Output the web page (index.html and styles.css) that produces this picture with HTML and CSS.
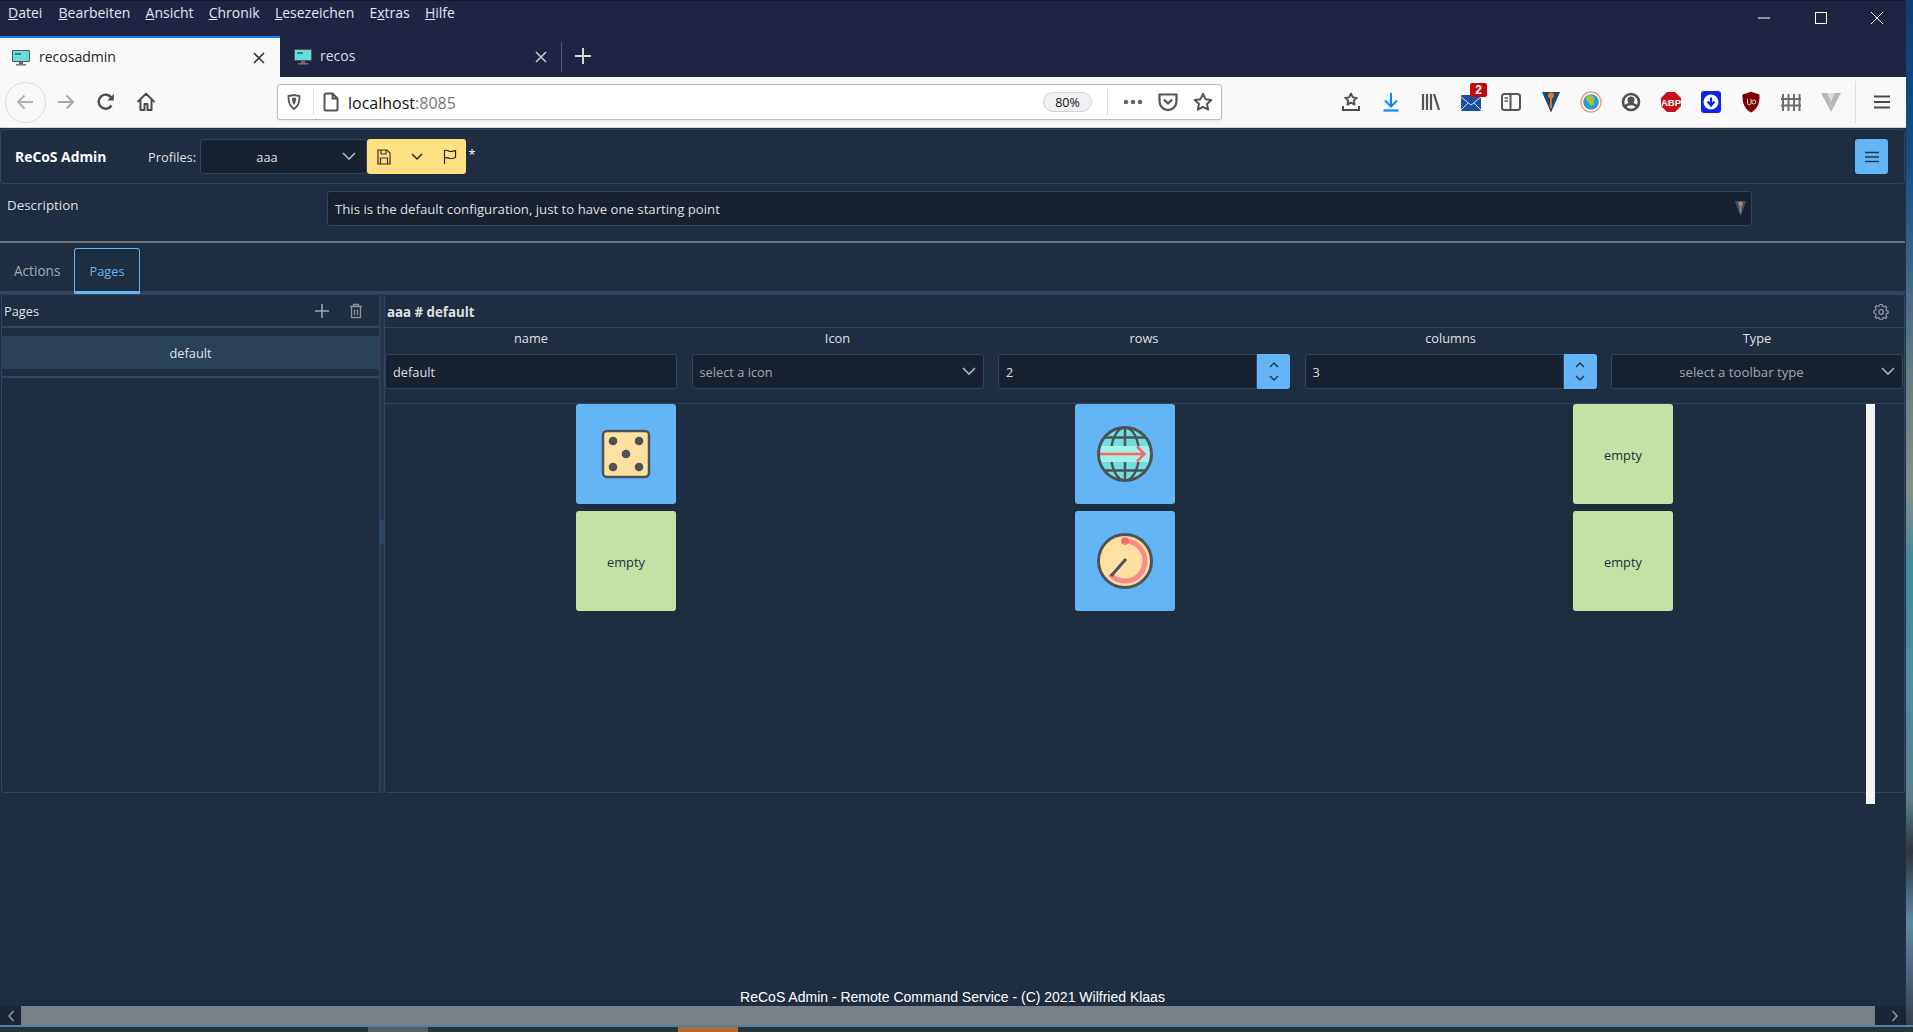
FILE: index.html
```html
<!DOCTYPE html>
<html lang="de">
<head>
<meta charset="utf-8">
<title>recosadmin</title>
<link rel="stylesheet" href="styles.css">
</head>
<body>
<div class="screen">
  <div class="window">
    <div class="menubar">
      <nav class="menu">
        <span><u>D</u>atei</span><span><u>B</u>earbeiten</span><span><u>A</u>nsicht</span><span><u>C</u>hronik</span><span><u>L</u>esezeichen</span><span>E<u>x</u>tras</span><span><u>H</u>ilfe</span>
      </nav>
      <div class="winctl">
        <svg width="14" height="14" viewBox="0 0 14 14"><path d="M1 7h12" stroke="#fff" fill="none"/></svg>
        <svg width="14" height="14" viewBox="0 0 14 14"><rect x="1.5" y="1.5" width="11" height="11" stroke="#fff" fill="none"/></svg>
        <svg width="14" height="14" viewBox="0 0 14 14"><path d="M1 1l12 12M13 1L1 13" stroke="#fff" fill="none"/></svg>
      </div>
    </div>
    <div class="tabstrip">
      <div class="btab btab-active">
        <svg class="favicon" width="18" height="16" viewBox="0 0 18 16"><rect width="18" height="12" rx="1" fill="#555"/><rect x="1" y="1" width="16" height="10" fill="#66dcdc"/><rect x="3" y="3" width="6" height="2" fill="#2a8a8a"/><rect x="7" y="12" width="4" height="2" fill="#666"/><rect x="4" y="14" width="10" height="1.5" fill="#777"/></svg>
        <span class="btab-title">recosadmin</span>
        <svg class="btab-x" width="14" height="14" viewBox="0 0 14 14"><path d="M2 2l10 10M12 2L2 12" stroke="#333" stroke-width="1.6" fill="none"/></svg>
      </div>
      <div class="btab btab-idle">
        <svg class="favicon" width="18" height="16" viewBox="0 0 18 16"><rect width="18" height="12" rx="1" fill="#555"/><rect x="1" y="1" width="16" height="10" fill="#66dcdc"/><rect x="3" y="3" width="6" height="2" fill="#2a8a8a"/><rect x="7" y="12" width="4" height="2" fill="#666"/><rect x="4" y="14" width="10" height="1.5" fill="#777"/></svg>
        <span class="btab-title">recos</span>
        <svg class="btab-x" width="14" height="14" viewBox="0 0 14 14"><path d="M2 2l10 10M12 2L2 12" stroke="#c8c8d0" stroke-width="1.6" fill="none"/></svg>
      </div>
      <div class="tabsep"></div>
      <svg class="newtab" width="18" height="18" viewBox="0 0 18 18"><path d="M9 1v16M1 9h16" stroke="#d8d8de" stroke-width="2" fill="none"/></svg>
    </div>
    <div class="toolbar">
      <div class="nav-btns">
        <div class="back-circle">
          <svg width="20" height="20" viewBox="0 0 20 20"><path d="M18 10H3M9.5 3.5L3 10l6.5 6.5" stroke="#b0b0b4" stroke-width="2" fill="none"/></svg>
        </div>
        <svg class="nb-forward" width="20" height="20" viewBox="0 0 20 20"><path d="M2 10h15M10.5 3.5L17 10l-6.5 6.5" stroke="#a8a8ac" stroke-width="2" fill="none"/></svg>
        <svg class="nb-reload" width="20" height="20" viewBox="0 0 20 20"><path d="M15.5 13.5A7 7 0 1 1 15.6 6" stroke="#4a4a4f" stroke-width="2.4" fill="none"/><path d="M17.8 2v6.4h-6.4z" fill="#4a4a4f"/></svg>
        <svg class="nb-home" width="20" height="20" viewBox="0 0 20 20"><path d="M1.5 10L10 1.8 18.5 10M4.5 8v10h4v-6h3v6h4V8" stroke="#4a4a4f" stroke-width="2" fill="none" stroke-linejoin="round"/></svg>
      </div>
      <div class="urlbar">
        <svg class="ub-shield" width="14" height="16" viewBox="0 0 14 16"><path d="M1.500 2L7 1l5.500 1c.3 5.500-1 10-5.500 13C2.500 12 1.200 7.500 1.500 2z" stroke="#555" stroke-width="1.800" fill="none"/><path d="M5 3.800h4c0 3.500-.5 5.500-2 7.200-1.500-1.700-2-3.700-2-7.200z" fill="#555"/></svg>
        <div class="ub-sep"></div>
        <svg class="ub-page" width="16" height="20" viewBox="0 0 16 20"><path d="M3 1.500h6.500L14.500 6.500V17a1.500 1.500 0 0 1-1.500 1.500H3A1.500 1.500 0 0 1 1.500 17V3A1.500 1.500 0 0 1 3 1.500zM9.500 1.500v5h5" stroke="#555" stroke-width="2" fill="none"/></svg>
        <span class="ub-url">localhost<span class="ub-port">:8085</span></span>
        <span class="ub-zoom">80%</span>
        <div class="ub-sep ub-sep2"></div>
        <svg class="ub-dots" width="20" height="6" viewBox="0 0 20 6"><circle cx="3" cy="3" r="2.300" fill="#666"/><circle cx="10" cy="3" r="2.300" fill="#666"/><circle cx="17" cy="3" r="2.300" fill="#666"/></svg>
        <svg class="ub-pocket" width="20" height="18" viewBox="0 0 20 18"><path d="M1.500 1.500h17v7a8.500 8.500 0 0 1-17 0zM6 6.500l4 4 4-4" stroke="#555" stroke-width="2.200" fill="none" stroke-linejoin="round"/></svg>
        <svg class="ub-star" width="20" height="20" viewBox="0 0 20 20"><path d="M10 1.800l2.500 5.400 5.800.7-4.300 4 1.200 5.800L10 14.800l-5.200 2.900L6 11.900l-4.300-4 5.800-.7z" stroke="#555" stroke-width="2" fill="none" stroke-linejoin="round"/></svg>
      </div>
      <div class="tb-icons">
        <span class="tbi"><svg width="20" height="20" viewBox="0 0 20 20"><path d="M10 1.500l1.800 3.800 4 .5-3 2.800.8 4L10 10.600 6.400 12.600l.8-4-3-2.800 4-.5z" stroke="#4a4a4f" stroke-width="1.800" fill="none" stroke-linejoin="round"/><path d="M2 14v4h16v-4" stroke="#4a4a4f" stroke-width="2" fill="none"/></svg></span>
        <span class="tbi"><svg width="18" height="20" viewBox="0 0 18 20"><path d="M9 1v13M3 8.500l6 6 6-6" stroke="#0a84ff" stroke-width="2" fill="none"/><path d="M1.500 18.500h15" stroke="#0a84ff" stroke-width="2.200"/></svg></span>
        <span class="tbi"><svg width="20" height="20" viewBox="0 0 20 20"><path d="M2 2v16M6 2v16M10 2v16M13 2l5 16" stroke="#555" stroke-width="2.200" fill="none"/></svg></span>
        <span class="tbi tbi-mail"><svg width="20" height="16" viewBox="0 0 20 16"><rect width="20" height="16" rx="1" fill="#1f4ea0"/><path d="M0 2l10 8 10-8M0 15l7-7M20 15l-7-7" stroke="#d8e2f4" stroke-width="1" fill="none"/></svg><b class="mail-badge">2</b></span>
        <span class="tbi"><svg width="20" height="18" viewBox="0 0 20 18"><rect x="1" y="1" width="18" height="16" rx="2.500" stroke="#555" stroke-width="2" fill="none"/><path d="M9.500 1v16" stroke="#555" stroke-width="2"/><path d="M3.500 5h3.500M3.500 8h3.500" stroke="#555" stroke-width="1.500"/></svg></span>
        <span class="tbi"><svg width="20" height="22" viewBox="0 0 20 22"><path d="M1 1h18L10 21.500z" fill="#1a4a72"/><circle cx="10" cy="4.500" r="3" fill="#e8732a"/><path d="M10 6v11" stroke="#e8732a" stroke-width="2"/></svg></span>
        <span class="tbi"><svg width="22" height="22" viewBox="0 0 22 22"><circle cx="11" cy="11" r="10" fill="#fff" stroke="#f59a7a" stroke-width="1.500"/><circle cx="11" cy="11" r="7.800" fill="#2f9ccf"/><path d="M7 4.500c3-1 6 0 7 2s-1 3 0 5-2 4-3.500 3-1-3-3-4-2-4-.5-6z" fill="#9cc24a"/></svg></span>
        <span class="tbi"><svg width="20" height="20" viewBox="0 0 20 20"><circle cx="10" cy="10" r="8" stroke="#505050" stroke-width="2.600" fill="none"/><circle cx="10" cy="8" r="3.500" fill="#505050"/><path d="M4 15c2-4 10-4 12 0" stroke="#505050" stroke-width="2.600" fill="none"/></svg></span>
        <span class="tbi"><svg width="22" height="22" viewBox="0 0 22 22"><path d="M7 1h8l6 6v8l-6 6H7l-6-6V7z" fill="#c4111b"/><text class="abp" x="11" y="14.500" text-anchor="middle">ABP</text></svg></span>
        <span class="tbi"><svg width="20" height="22" viewBox="0 0 20 22"><rect width="20" height="22" rx="3" fill="#0a24f0"/><circle cx="10" cy="11" r="7.500" fill="#fff"/><path d="M10 6.500v7M6.500 10.500l3.500 4 3.500-4" stroke="#0a24f0" stroke-width="2.200" fill="none"/></svg></span>
        <span class="tbi"><svg width="20" height="22" viewBox="0 0 20 22"><path d="M10 .8L18.500 3.500c.5 9-2.500 15-8.500 18C4 18.500 1 12.500 1.500 3.500z" fill="#800000"/><path d="M6.500 8v4a1.800 1.800 0 0 0 3.600 0V8" stroke="#ddd" stroke-width="1" fill="none"/><circle cx="12.800" cy="11" r="2" stroke="#ddd" stroke-width="1" fill="none"/></svg></span>
        <span class="tbi"><svg width="20" height="20" viewBox="0 0 20 20"><path d="M2 2v17M7.500 2v17M13 2v17M18.500 2v17M0 7h20M0 13.500h20" stroke="#6e6e6e" stroke-width="2" fill="none"/></svg></span>
        <span class="tbi"><svg width="20" height="20" viewBox="0 0 20 20"><path d="M0 1h7l3 8 3-8h7l-10 19z" fill="#b8b8b8"/><path d="M6 1h8l-4 9z" fill="#d8d8d8"/></svg></span>
      </div>
      <div class="tb-sep"></div>
      <svg class="tb-burger" width="16" height="14" viewBox="0 0 16 14"><path d="M0 1.500h16M0 7h16M0 12.500h16" stroke="#4a4a4f" stroke-width="2.200"/></svg>
    </div>

    <main class="app">
      <header class="navbar">
        <strong class="brand">ReCoS Admin</strong>
        <span class="profiles-label">Profiles:</span>
        <div class="dropdown dropdown-profile">
          <span class="dropdown-value">aaa</span>
          <svg class="chev" width="14" height="9" viewBox="0 0 14 9"><path d="M1 1l6 6 6-6" stroke="#a8b4c0" stroke-width="1.700" fill="none"/></svg>
        </div>
        <div class="warnbtn warnbtn-split">
          <svg width="14" height="16" viewBox="0 0 14 16"><path d="M1 1h9l3 3v11H1zM4 1v4h5V1M3.500 15V9h7v6" stroke="#3a3320" stroke-width="1.200" fill="none"/></svg>
          <svg width="12" height="8" viewBox="0 0 12 8"><path d="M1 1l5 5 5-5" stroke="#2a2618" stroke-width="1.500" fill="none"/></svg>
        </div>
        <div class="warnbtn warnbtn-flag">
          <svg width="14" height="16" viewBox="0 0 14 16"><path d="M1.500 15V1.500c3-1 4 1 6 1s3-.5 5-1v7c-2 1-3 1-5 1s-3-1.500-6-.5" stroke="#2a2618" stroke-width="1.200" fill="none"/></svg>
        </div>
        <span class="dirty">*</span>
        <div class="menu-btn">
          <svg width="14" height="12" viewBox="0 0 14 12"><path d="M0 1.500h14M0 6h14M0 10.500h14" stroke="#24384e" stroke-width="1.500"/></svg>
        </div>
      </header>

      <section class="desc-row">
        <span class="desc-label">Description</span>
        <div class="input desc-input">
          <span>This is the default configuration, just to have one starting point</span>
          <svg width="13" height="17" viewBox="0 0 12 16"><path d="M.5 1h11L6 15.500z" fill="#1f5a88"/><circle cx="6" cy="3.500" r="2.200" fill="#e8732a"/><path d="M6 5v7" stroke="#e8732a" stroke-width="1.500"/></svg>
        </div>
      </section>
      <div class="rule"></div>

      <div class="tabs">
        <span class="tab tab-idle">Actions</span>
        <span class="tab tab-active">Pages</span>
      </div>

      <div class="split">
        <aside class="panel panel-left">
          <div class="panel-head">
            <span>Pages</span>
            <div class="head-icons">
              <svg width="14" height="14" viewBox="0 0 14 14"><path d="M7 0v14M0 7h14" stroke="#a0a8b2" stroke-width="1.500"/></svg>
              <svg width="14" height="16" viewBox="0 0 14 16"><path d="M1 3.500h12M4.500 3.500V1.500h5v2M2.500 3.500v11h9v-11M5.500 6.500v5.500M8.500 6.500v5.500" stroke="#8a929c" stroke-width="1.300" fill="none"/></svg>
            </div>
          </div>
          <div class="listbox">
            <div class="list-item">default</div>
          </div>
        </aside>
        <div class="gutter"><div class="gutter-handle"></div></div>
        <section class="panel panel-right">
          <div class="panel-head panel-head-right">
            <strong class="page-title">aaa # default</strong>
            <svg width="16" height="16" viewBox="0 0 16 16"><path d="M6.800 1h2.400l.4 2 1.500.7 1.800-1 1.500 1.700-1.100 1.700.5 1.600 1.900.7v2.200l-1.900.7-.5 1.600 1.100 1.700-1.500 1.700-1.800-1-1.500.7-.4 2H6.800l-.4-2-1.500-.7-1.800 1-1.500-1.700 1.100-1.700-.5-1.600L.3 10.200V8l1.900-.7.500-1.600-1.100-1.700L3.100 2.300l1.800 1 1.500-.7z" transform="translate(.7 -.6) scale(.92)" stroke="#8f99a5" stroke-width="1.300" fill="none"/><circle cx="8" cy="8" r="2.300" stroke="#8f99a5" stroke-width="1.300" fill="none"/></svg>
          </div>
          <div class="form">
            <label class="form-label">name</label>
            <label class="form-label">Icon</label>
            <label class="form-label">rows</label>
            <label class="form-label">columns</label>
            <label class="form-label">Type</label>

            <div class="input"><span>default</span></div>
            <div class="dropdown">
              <span class="dropdown-ph dropdown-ph-left">select a icon</span>
              <svg class="chev" width="14" height="9" viewBox="0 0 14 9"><path d="M1 1l6 6 6-6" stroke="#a8b4c0" stroke-width="1.700" fill="none"/></svg>
            </div>
            <div class="spinner">
              <div class="input spinner-input"><span>2</span></div>
              <div class="spinner-btns">
                <svg width="10" height="7" viewBox="0 0 10 7"><path d="M1 6l4-4 4 4" stroke="#24384e" stroke-width="1.500" fill="none"/></svg>
                <svg width="10" height="7" viewBox="0 0 10 7"><path d="M1 1l4 4 4-4" stroke="#24384e" stroke-width="1.500" fill="none"/></svg>
              </div>
            </div>
            <div class="spinner">
              <div class="input spinner-input"><span>3</span></div>
              <div class="spinner-btns">
                <svg width="10" height="7" viewBox="0 0 10 7"><path d="M1 6l4-4 4 4" stroke="#24384e" stroke-width="1.500" fill="none"/></svg>
                <svg width="10" height="7" viewBox="0 0 10 7"><path d="M1 1l4 4 4-4" stroke="#24384e" stroke-width="1.500" fill="none"/></svg>
              </div>
            </div>
            <div class="dropdown">
              <span class="dropdown-ph dropdown-ph-type">select a toolbar type</span>
              <svg class="chev" width="14" height="9" viewBox="0 0 14 9"><path d="M1 1l6 6 6-6" stroke="#a8b4c0" stroke-width="1.700" fill="none"/></svg>
            </div>
          </div>
          <div class="board">
            <div class="tiles">
              <div class="tile tile-action">
                <svg width="50" height="50" viewBox="0 0 50 50"><rect x="2" y="2" width="46" height="46" rx="4" fill="#ffe0a3" stroke="#4d5257" stroke-width="2.500"/><circle cx="12" cy="12" r="4.300" fill="#4d5257"/><circle cx="38" cy="12" r="4.300" fill="#4d5257"/><circle cx="25" cy="25" r="4.300" fill="#4d5257"/><circle cx="12" cy="38" r="4.300" fill="#4d5257"/><circle cx="38" cy="38" r="4.300" fill="#4d5257"/></svg>
              </div>
              <div class="tile tile-action">
                <svg width="60" height="60" viewBox="0 0 60 60"><circle cx="30" cy="30" r="26.500" fill="#6fe0df"/><g stroke="#4d5257" stroke-width="2.500" fill="none"><path d="M9 13.500h42M9 46.500h42"/><ellipse cx="30" cy="30" rx="14" ry="26.500"/><path d="M30 3.500v53"/></g><path d="M4 22h52v16H4z" fill="#a6f0ec"/><path d="M4.500 30h44M42 22.500l7.500 7.500-7.500 7.500" stroke="#f46a6a" stroke-width="2.500" fill="none"/><circle cx="30" cy="30" r="26.500" fill="none" stroke="#4d5257" stroke-width="3"/></svg>
              </div>
              <div class="tile tile-empty">empty</div>
              <div class="tile tile-empty">empty</div>
              <div class="tile tile-action">
                <svg width="60" height="60" viewBox="0 0 60 60"><circle cx="30" cy="30" r="26.500" fill="#ffe0a3" stroke="#4d5257" stroke-width="3"/><path d="M30 10A20 20 0 1 1 15 43.200" fill="none" stroke="#fb8a8a" stroke-width="5"/><circle cx="30" cy="10" r="3.800" fill="#f46a6a"/><path d="M31 28L16 45" stroke="#4d5257" stroke-width="3"/></svg>
              </div>
              <div class="tile tile-empty">empty</div>
            </div>
            <div class="whitebar"></div>
          </div>
        </section>
      </div>

      <footer class="footer">ReCoS Admin - Remote Command Service - (C) 2021 Wilfried Klaas</footer>
    </main>

    <div class="hscroll">
      <div class="hs-btn"><svg width="8" height="12" viewBox="0 0 8 12"><path d="M6.500 1L2 6l4.500 5" stroke="#8a929c" stroke-width="1.600" fill="none"/></svg></div>
      <div class="hs-thumb"></div>
      <div class="hs-btn hs-btn-end"><svg width="8" height="12" viewBox="0 0 8 12"><path d="M1.500 1L6 6l-4.500 5" stroke="#8a929c" stroke-width="1.600" fill="none"/></svg></div>
    </div>
  </div>
  <div class="wallpaper"></div>
</div>
<div class="taskbar">
  <span class="task task-grey"></span>
  <span class="task task-orange"></span>
</div>
</body>
</html>
```
FILE: styles.css
```css
* { box-sizing: border-box; }
html, body { margin: 0; padding: 0; }
body {
  width: 1913px;
  height: 1032px;
  overflow: hidden;
  display: flex;
  flex-direction: column;
  background: #26343c;
  font-family: "Open Sans", "Noto Sans", sans-serif;
}
svg { display: block; flex: none; }
.screen { display: flex; height: 1025px; flex: none; }
.window { width: 1906px; display: flex; flex-direction: column; flex: none; }
.wallpaper {
  flex: 1;
  background: linear-gradient(180deg, #0c3d74 0, #14508c 16%, #6b7f80 38%, #85908a 48%, #3f8a9c 55%, #4c8fa4 66%, #5a7f8a 78%, #30343a 83%, #5d88a8 90%, #38424c 100%);
}

/* browser chrome */
.menubar {
  height: 36px;
  background: #1f2442;
  border-top: 1px solid #14162a;
  display: flex;
  justify-content: space-between;
  color: #e4e4ea;
  font-size: 14px;
}
.menu { display: flex; gap: 15.200px; padding: 2px 0 0 8px; line-height: 20px; }
.menu span:first-child { margin-right: 1px; }
.winctl { display: flex; gap: 42.500px; padding: 10px 22px 0 0; }
.tabstrip { height: 41px; background: #1f2442; display: flex; align-items: center; flex: none; }
.btab { height: 41px; display: flex; align-items: center; font-size: 14px; }
.btab-active {
  width: 280px;
  background: #f9f9fa;
  border-top: 2px solid #0a84ff;
  color: #222;
  padding: 0 14px 0 12px;
}
.btab-idle { width: 281px; color: #dcdce2; padding: 0 13px 0 14px; }
.favicon { margin-right: 9px; }
.btab-idle .favicon { margin-right: 8px; }
.btab-title { flex: 1; padding-bottom: 2px; }
.tabsep { width: 1px; height: 30px; background: #50556e; }
.newtab { margin-left: 12px; margin-bottom: 2px; }
.toolbar {
  height: 51px;
  background: #f9f9fa;
  border-bottom: 1px solid #d8d8da;
  display: flex;
  align-items: center;
  flex: none;
}
.nav-btns { width: 277px; display: flex; align-items: center; padding-left: 5px; }
.back-circle {
  width: 41px; height: 41px;
  border: 1px solid #dcdcde;
  border-radius: 50%;
  display: flex; align-items: center; justify-content: center;
  padding-right: 2px;
}
.nb-forward { margin-left: 10px; }
.nb-reload { margin-left: 20px; }
.nb-home { margin-left: 20px; }
.urlbar {
  width: 945px;
  height: 36px;
  background: #fff;
  border: 1px solid #bcbcbf;
  border-radius: 3px;
  display: flex;
  align-items: center;
  flex: none;
  padding: 0 8px 0 9px;
  box-shadow: 0 1px 3px rgba(0,0,0,.08);
}
.ub-sep { width: 1px; height: 26px; background: #dcdcde; margin-left: 12px; }
.ub-page { margin-left: 9px; }
.ub-url { margin-left: 9px; font-size: 16px; color: #111; flex: 1; padding-top: 1px; }
.ub-port { color: #777; }
.ub-zoom {
  width: 49px; height: 20px;
  border: 1px solid #d4d4d6;
  background: #f0f0f2;
  border-radius: 10px;
  font-size: 12.500px;
  line-height: 19px;
  text-align: center;
  color: #111;
}
.ub-sep2 { margin-left: 15px; }
.ub-dots { margin-left: 15px; }
.ub-pocket { margin-left: 15px; }
.ub-star { margin-left: 15px; }
.tb-icons { display: flex; margin-left: 109px; }
.tbi { width: 40px; height: 40px; display: flex; align-items: center; justify-content: center; position: relative; }
.tbi-mail { padding-top: 2px; }
.mail-badge {
  position: absolute;
  right: 4px; top: 1px;
  width: 17px; height: 14px;
  background: #c00c0c;
  border-radius: 2px;
  color: #fff;
  font: bold 12px/14px "Liberation Sans", sans-serif;
  text-align: center;
}
.abp { font: bold 9.500px "Liberation Sans", sans-serif; fill: #fff; }
.tb-sep { width: 1px; height: 42px; background: #dedee0; margin-left: 4px; }
.tb-burger { margin-left: 18px; }

/* application */
.app {
  flex: 1;
  min-height: 0;
  display: flex;
  flex-direction: column;
  background: #1f2d40;
  color: rgba(255,255,255,.87);
  font-size: 12.800px;
  border-right: 1px solid #243247;
}
.navbar {
  height: 55px;
  flex: none;
  margin-top: 1px;
  border: 1px solid #304562;
  border-radius: 3px;
  display: flex;
  align-items: center;
  padding-left: 14px;
}
.brand { font-weight: 700; font-size: 13.900px; color: #fff; width: 133px; }
.profiles-label { width: 51.500px; }
.dropdown {
  height: 35px;
  background: #17212f;
  border: 1px solid #304562;
  border-radius: 3px;
  display: flex;
  align-items: center;
  padding-right: 7px;
}
.dropdown-profile { width: 167px; flex: none; padding-right: 10px; }
.dropdown-value, .dropdown-ph { flex: 1; text-align: center; }
.dropdown-value { padding-right: 8px; }
.dropdown-ph { color: rgba(255,255,255,.6); }
.dropdown-ph-left { text-align: left; padding-left: 7px; }
.dropdown-ph-type { font-size: 13.200px; padding-right: 10px; }
.warnbtn {
  height: 35px;
  background: #ffe082;
  display: flex;
  align-items: center;
  flex: none;
}
.warnbtn-split { width: 66px; border-radius: 3px 0 0 3px; padding-left: 10px; gap: 20px; }
.warnbtn-flag { width: 33px; border-radius: 0 3px 3px 0; justify-content: center; padding-left: 1px; }
.dirty { margin-left: 3px; color: #fff; padding-bottom: 5px; }
.menu-btn {
  width: 33px; height: 35px;
  margin-left: auto;
  margin-right: 16px;
  background: #64b5f6;
  border-radius: 3px;
  display: flex; align-items: center; justify-content: center;
}
.desc-row { height: 57px; flex: none; display: flex; align-items: flex-start; padding: 7px 0 0 7px; }
.desc-label { width: 320px; font-size: 13.400px; line-height: 28px; }
.input {
  height: 35px;
  background: #17212f;
  border: 1px solid #304562;
  border-radius: 3px;
  display: flex;
  align-items: center;
  padding: 0 7px;
}
.desc-input { width: 1425px; justify-content: space-between; padding-right: 4px; font-size: 13.200px; }
.rule { height: 2px; flex: none; background: #6c7279; }
.tabs {
  height: 51px;
  flex: none;
  display: flex;
  align-items: flex-end;
  border-bottom: 3px solid #304562;
}
.tab {
  height: 46px;
  margin-bottom: -3px;
  padding: 0 14px;
  width: 74px;
  line-height: 44px;
  color: rgba(255,255,255,.6);
}
.tab-idle { font-size: 13.600px; line-height: 46px; }
.tab-active {
  width: 66px;
  color: #64b5f6;
  border: 1px solid #64b5f6;
  border-bottom-width: 3px;
  border-radius: 3px 3px 0 0;
  text-align: center;
  padding: 0;
}
.split { height: 499px; flex: none; display: flex; padding-left: 1px; }
.panel { border: 1px solid #304562; border-radius: 3px; display: flex; flex-direction: column; }
.panel-left { width: 379px; flex: none; }
.gutter { width: 4px; flex: none; background: #263548; display: flex; align-items: center; }
.gutter-handle { width: 4px; height: 24px; background: #304562; margin-bottom: 24px; }
.panel-right { flex: 1; min-width: 0; }
.panel-head {
  height: 33px;
  flex: none;
  display: flex;
  align-items: center;
  justify-content: space-between;
  padding: 1px 16px 0 2px;
  border-bottom: 1px solid #304562;
}
.panel-left .panel-head { border-bottom-width: 2px; }
.head-icons { display: flex; gap: 20px; align-items: center; margin-top: -1px; }
.panel-head-right { padding-right: 15px; }
.page-title { font-size: 13.300px; }
.listbox { height: 50px; padding-top: 8px; border-bottom: 2px solid #304562; }
.list-item { height: 33px; background: #2a4158; text-align: center; line-height: 34px; }
.form {
  height: 76px;
  flex: none;
  display: grid;
  grid-template-columns: repeat(5, 292px);
  grid-template-rows: 26px 35px;
  column-gap: 14.500px;
  border-bottom: 1px solid #304562;
}
.form-label { text-align: center; line-height: 20px; }
.spinner { display: flex; }
.spinner-input { flex: 1; border-radius: 3px 0 0 3px; }
.spinner-btns {
  width: 33px;
  background: #64b5f6;
  border-radius: 0 3px 3px 0;
  display: flex;
  flex-direction: column;
  align-items: center;
  justify-content: space-around;
  padding: 4px 0;
}
.board { flex: 1; min-height: 0; display: flex; align-items: flex-start; padding-left: 191px; }
.tiles {
  display: grid;
  grid-template-columns: repeat(3, 100px);
  grid-auto-rows: 100px;
  column-gap: 398.500px;
  row-gap: 7px;
}
.tile { border-radius: 3px; display: flex; align-items: center; justify-content: center; }
.tile-action { background: #64b5f6; }
.tile-empty { background: #c5e1a5; color: #1f2d40; padding-top: 2px; }
.whitebar { width: 9px; height: 400px; flex: none; margin-left: 193px; background: #f4f4f5; }
.footer {
  flex: 1;
  display: flex;
  align-items: flex-end;
  justify-content: center;
  font: 14px/18px "Liberation Sans", sans-serif;
  color: #fff;
}
.hscroll { height: 19px; flex: none; display: flex; background: #1b2538; }
.hs-btn { width: 21px; flex: none; display: flex; align-items: center; justify-content: center; }
.hs-btn-end { width: 31px; justify-content: flex-end; padding-right: 7px; }
.hs-thumb { flex: 1; background: #7a8087; }
.taskbar {
  flex: 1;
  display: flex;
  background: linear-gradient(180deg, #4f83a0 0, #4f83a0 28%, #26343c 28%, #26343c 100%);
  padding: 2px 0 0 368px;
}
.task { width: 60px; }
.task-grey { background: #555d64; }
.task-orange { background: #b46a30; margin-left: 250px; }
```
